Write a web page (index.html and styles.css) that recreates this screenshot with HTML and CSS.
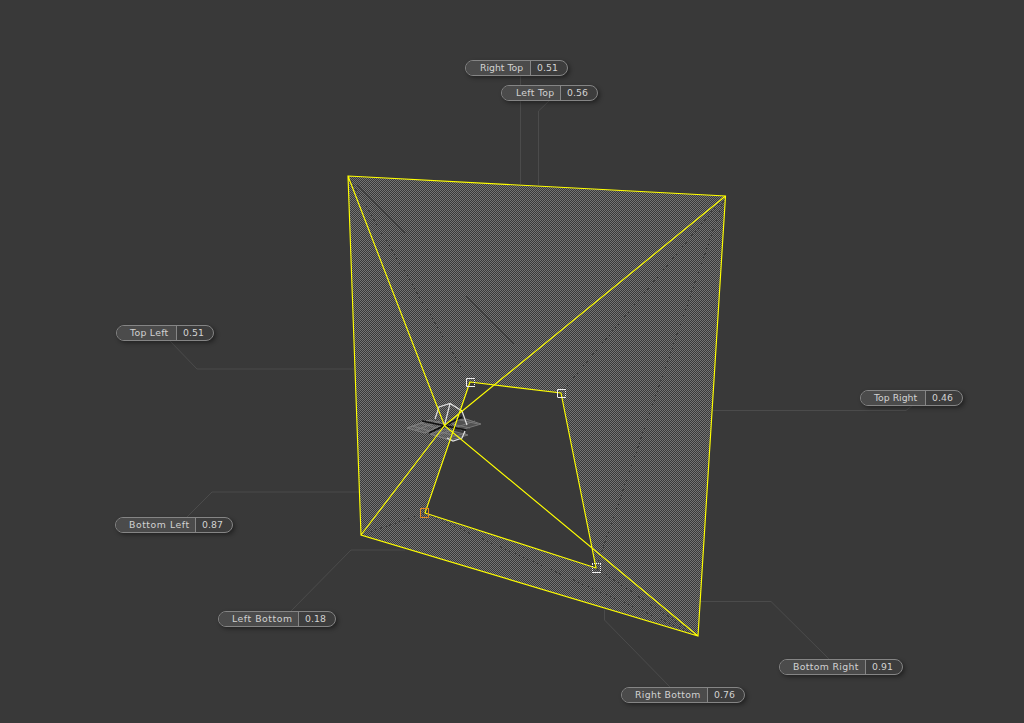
FILE: index.html
```html
<!DOCTYPE html>
<html lang="en">
<head>
<meta charset="utf-8">
<title>Corner Pin</title>
<link rel="stylesheet" href="styles.css">
</head>
<body>
<main class="viewport">
<svg class="scene" width="1024" height="723" viewBox="0 0 1024 723">
  <defs>
    <pattern id="checker" width="2" height="2" patternUnits="userSpaceOnUse">
      <rect width="2" height="2" fill="#393939"/>
      <path d="M0 0h1v1h-1zM1 1h1v1h-1z"/>
    </pattern>
  </defs>
  <g class="leader">
    <path d="M520.5 76V184M549 101L538.5 111V185M170 341L197 369H354M913 405L906 410.5H713M187 517L212 492H359M290 612L351 550H405M604.5 610V620L671 688M700 601.5H771L829 659"/>
  </g>
  <path class="mask" fill-rule="evenodd" d="M348 176L725.500 196L698 636L361 535ZM470 382L561 393L596 568L425 513Z"/>
  <g class="seam">
    <path d="M348 176L470 382M725 196L561 393M725 196L596 568M361 535L425 513M698 636L596 568M698 636L425 513"/>
  </g>
  <path class="crease" d="M357 185L405 233M466 296L514 344"/>
  <g class="grid">
    <path class="tiles" d="M407 428L430 420L444 424L425 433ZM450 421L466 419L481 424L461 430ZM430 434L445 429L468 435L450 440Z"/>
    <path d="M407 428L430 420M416 430L440 421M425 433L444 424M412 426L430 431M420 423L437 428M452 424L470 428M460 420L478 424M454 428L475 421M430 434L450 440M437 431L460 437M434 436L452 430M445 439L466 433"/>
  </g>
  <path class="axis" d="M422 421L466 430M429 433L462 417"/>
  <path class="lamp" d="M435 419L439 407L450 403.500L462 411L467 425M450 403.500L444.500 425.500M447 438L453 441L462 438L465 431"/>
  <g class="wire">
    <path d="M348 176L725.500 196L698 636L361 535ZM348 176L444.500 425.500L725.500 196M361 535L444.500 425.500L698 636M470 382L561 393L596 568L425 513Z"/>
  </g>
  <g class="handle">
    <path d="M474 378.500H466.500V386.500H474M557.500 397V389.500H565M557.500 397.500H565.500M592 572.500H601"/>
    <path class="dotted" d="M474.500 378V387M565.500 389V398M592 563.500H601M592.500 564V572M600.500 564V572"/>
  </g>
  <path class="handle active" d="M429 508.500H420.500V517.500H428.500V509"/>
</svg>
<div class="pin right-top"><span class="name">Right Top</span><span class="value">0.51</span></div>
<div class="pin left-top"><span class="name">Left Top</span><span class="value">0.56</span></div>
<div class="pin top-left"><span class="name">Top Left</span><span class="value">0.51</span></div>
<div class="pin top-right"><span class="name">Top Right</span><span class="value">0.46</span></div>
<div class="pin bottom-left"><span class="name">Bottom Left</span><span class="value">0.87</span></div>
<div class="pin left-bottom"><span class="name">Left Bottom</span><span class="value">0.18</span></div>
<div class="pin right-bottom"><span class="name">Right Bottom</span><span class="value">0.76</span></div>
<div class="pin bottom-right"><span class="name">Bottom Right</span><span class="value">0.91</span></div>
</main>
</body>
</html>
```
FILE: styles.css
```css
body { margin: 0; background: #393939; overflow: hidden; }
.viewport { position: relative; width: 1024px; height: 723px; font: 9.3px/14px "DejaVu Sans", sans-serif; color: #d2d2d2; }
.scene { display: block; }
.scene path { fill: none; }
.scene pattern path { fill: #747474; }
.scene .mask { fill: url(#checker); shape-rendering: crispEdges; }
.leader { stroke: #4b4b4b; stroke-width: 1; }
.seam { stroke: #393939; stroke-width: 1; stroke-dasharray: 2 3; shape-rendering: crispEdges; opacity: .8; }
.crease { stroke: #393939; stroke-width: 1; opacity: .75; }
.grid { stroke: #8c8c8c; stroke-width: 1; opacity: .75; }
.scene .tiles { fill: #777777; fill-opacity: .55; }
.axis { stroke: #111; stroke-width: 1.4; }
.lamp { stroke: #e0e0e0; stroke-width: 1.2; }
.wire { stroke: #ffff00; stroke-width: 1.15; }
.handle { stroke: #f0f0f0; stroke-width: 1; }
.handle .dotted { stroke-dasharray: 1 1; }
.active { stroke: #e58b20; }
.pin { position: absolute; box-sizing: border-box; height: 16px; display: flex; border: 1px solid #858585; border-radius: 8px; overflow: hidden; background: #3d3d3d; box-shadow: 2px 2px 4px rgba(0,0,0,.4); white-space: nowrap; }
.name { box-sizing: border-box; flex: 1; padding-left: 13px; background: #4b4b4b; }
.value { box-sizing: border-box; width: 37px; padding-left: 6px; border-left: 1px solid #858585; letter-spacing: .1px; }
.right-top { left: 465px; top: 60px; width: 103px; }
.left-top { left: 501px; top: 85px; width: 97px; }
.top-left { left: 116px; top: 325px; width: 98px; }
.top-right { left: 860px; top: 390px; width: 103px; }
.bottom-left { left: 115px; top: 517px; width: 118px; }
.left-bottom { left: 218px; top: 611px; width: 118px; }
.right-bottom { left: 621px; top: 687px; width: 124px; }
.bottom-right { left: 779px; top: 659px; width: 124px; }
.right-top .name, .left-top .name { padding-left: 14px; }
.left-top .name, .top-left .name { letter-spacing: .3px; }
.bottom-left .name, .left-bottom .name { letter-spacing: .55px; }
.right-bottom .name, .bottom-right .name { letter-spacing: .35px; }
```
